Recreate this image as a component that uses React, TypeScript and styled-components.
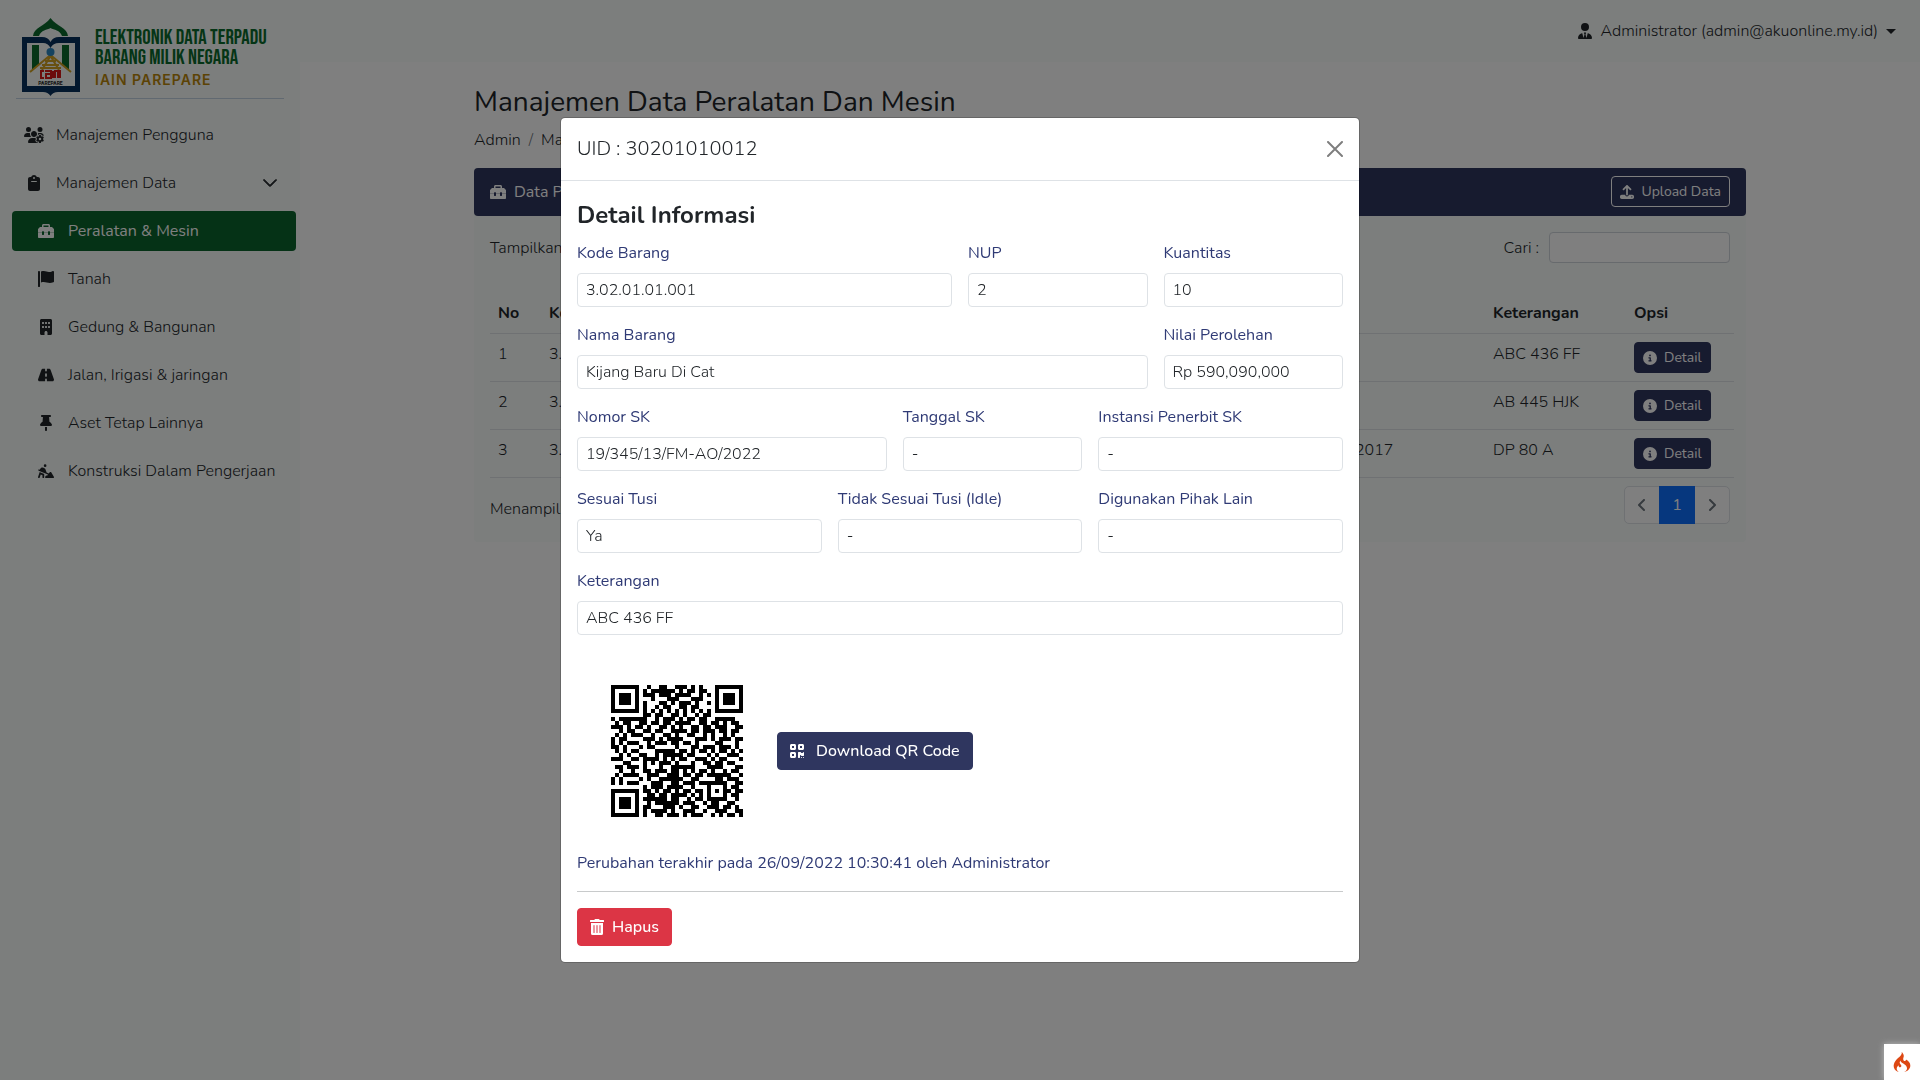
import React from 'react';
import styled, { createGlobalStyle } from 'styled-components';
import {
  FaUsersGear, FaClipboard, FaBuilding, FaRoad, FaThumbtack, FaPersonDigging,
  FaUserTie, FaUpload, FaCircleInfo, FaQrcode, FaAngleLeft, FaAngleRight,
} from 'react-icons/fa6';
import { FaTrashAlt } from 'react-icons/fa';
import { BsChevronDown } from 'react-icons/bs';
import { SiCodeigniter } from 'react-icons/si';

const navy = '#2f365f';
const tint = '#f8fcfa';

const GlobalStyle = createGlobalStyle`
  *, *::before, *::after { box-sizing: border-box; }
  body {
    margin: 0;
    background: #fff;
    color: #212529;
    font-family: Nunito, "Open Sans", "Noto Sans", sans-serif;
    font-size: 16px;
    font-weight: 300;
    line-height: 24px;
  }
  button, input, select { font: inherit; color: inherit; }
  h1, h2, h3, p { margin: 0; }
`;

const Shell = styled.div`
  display: grid;
  grid-template-columns: 300px 1fr;
  min-height: 100vh;
`;

const Sidebar = styled.aside`
  background: ${tint};
`;

const Brand = styled.a`
  display: flex;
  align-items: center;
  gap: 15px;
  height: 99px;
  margin: 0 16px;
  padding: 16px 0 0 6px;
  border-bottom: 1px solid #c3d3e2;
  text-decoration: none;
`;

const BrandText = styled.span`
  display: flex;
  flex-direction: column;
  padding-top: 6px;
  color: #0a6b2c;
  font-family: "Bebas Neue", "Roboto Condensed", Roboto, sans-serif;
  font-size: 21px;
  font-weight: 400;
  line-height: 20px;
  white-space: nowrap;
`;

const BrandPlace = styled.span`
  color: #b8860b;
  font-family: Inter, sans-serif;
  font-size: 14px;
  font-weight: 600;
  letter-spacing: 1px;
  line-height: 24px;
`;

const Menu = styled.nav`
  display: flex;
  flex-direction: column;
  gap: 8px;
  padding: 16px 4px 0 12px;
`;

const MenuLink = styled.a<{ $active?: boolean; $child?: boolean }>`
  display: flex;
  align-items: center;
  gap: 12px;
  height: 40px;
  padding: 0 18px 0 ${p => (p.$child ? 24 : 12)}px;
  border-radius: 4px;
  color: ${p => (p.$active ? '#fff' : '#212529')};
  background: ${p => (p.$active ? '#0a642c' : 'transparent')};
  font-weight: ${p => (p.$active ? 400 : 300)};
  text-decoration: none;
  white-space: nowrap;
`;

const IconBox = styled.span`
  display: inline-flex;
  justify-content: center;
  width: 20px;
  font-size: 16px;
`;

const Chevron = styled(BsChevronDown)`
  margin-left: auto;
  font-size: 16px;
  stroke-width: 1;
`;

const Topbar = styled.header`
  display: flex;
  justify-content: flex-end;
  align-items: center;
  height: 62px;
  padding-right: 24px;
  background: ${tint};
`;

const Account = styled.button`
  display: flex;
  align-items: center;
  gap: 8px;
  padding: 0;
  border: 0;
  background: none;
  svg { width: 14px; }
  &::after {
    content: '';
    border: 5px solid transparent;
    border-top-color: currentColor;
    border-bottom: 0;
  }
`;

const Content = styled.main`
  width: 100%;
  max-width: 1320px;
  margin: 0 auto;
  padding: 22px 24px;
`;

const Title = styled.h1`
  font-size: 28px;
  font-weight: 400;
  line-height: 36px;
`;

const Crumbs = styled.ol`
  display: flex;
  gap: 8px;
  margin: 8px 0 16px;
  padding: 0;
  list-style: none;
  li + li::before { content: '/'; padding-right: 8px; color: #6c757d; }
`;

const Card = styled.section`
  background: ${tint};
  border-radius: 4px;
`;

const CardHead = styled.div`
  display: flex;
  justify-content: space-between;
  align-items: center;
  height: 48px;
  padding: 0 16px 1px;
  border-radius: 4px;
  background: ${navy};
  color: #fff;
  font-weight: 400;
`;

const Inline = styled.div`
  display: flex;
  align-items: center;
  gap: 8px;
`;

const SmallButton = styled.button<{ $outline?: boolean }>`
  display: inline-flex;
  align-items: center;
  gap: 7px;
  height: 31px;
  padding: 0 8px;
  border: 1px solid ${p => (p.$outline ? '#fff' : navy)};
  border-radius: 4px;
  background: ${navy};
  color: #fff;
  font-size: 14px;
  font-weight: 400;
  svg { font-size: 14px; }
`;

const CardBody = styled.div`
  padding: 16px 12px 18px 16px;
`;

const Tools = styled.div`
  display: flex;
  justify-content: space-between;
  margin: 0 4px 14px 0;
  label { display: flex; align-items: center; gap: 10px; }
`;

const SearchBox = styled.input`
  width: 181px;
  height: 31px;
  padding: 0 8px;
  border: 1px solid #ced4da;
  border-radius: 4px;
  background: #fff;
`;

const LengthSelect = styled.select`
  height: 31px;
  border: 1px solid #ced4da;
  border-radius: 4px;
  background: #fff;
`;

const Table = styled.table`
  width: 100%;
  border-collapse: collapse;
  table-layout: fixed;
  th, td {
    height: 48px;
    padding: 8px;
    border-bottom: 1px solid #dee2e6;
    text-align: left;
    vertical-align: top;
    white-space: nowrap;
  }
  th { height: 56px; padding-top: 24px; font-weight: 700; }
  td:last-child { line-height: 0; }
`;

const TableFoot = styled.div`
  display: flex;
  justify-content: space-between;
  padding: 8px 4px 0 0;
  p { padding-top: 11px; }
`;

const Pager = styled.nav`
  display: flex;
  height: 38px;
  border: 1px solid #dee2e6;
  border-radius: 5px;
  background: #fff;
`;

const PageButton = styled.button<{ $current?: boolean }>`
  display: grid;
  place-items: center;
  width: ${p => (p.$current ? 36 : 34)}px;
  margin: ${p => (p.$current ? '-1px 0' : '0')};
  padding: 0;
  border: 0;
  background: ${p => (p.$current ? '#0d6efd' : 'transparent')};
  color: ${p => (p.$current ? '#fff' : '#6c757d')};
  font-weight: 400;
  svg { font-size: 16px; }
`;

const Backdrop = styled.div`
  position: fixed;
  inset: 0;
  overflow: auto;
  padding: 117px 16px;
  background: rgba(0, 0, 0, 0.5);
`;

const Dialog = styled.div`
  width: 100%;
  max-width: 800px;
  margin: 0 auto;
  border: 1px solid rgba(0, 0, 0, 0.2);
  border-radius: 5px;
  background: #fff;
  background-clip: padding-box;
`;

const DialogHead = styled.div`
  display: flex;
  align-items: center;
  justify-content: space-between;
  height: 63px;
  padding: 0 16px;
  border-bottom: 1px solid #dee2e6;
  h2 { font-size: 20px; font-weight: 300; line-height: 30px; }
`;

const CloseButton = styled.button`
  display: grid;
  padding: 0;
  border: 0;
  background: none;
  color: #000;
  opacity: 0.5;
`;

const DialogBody = styled.form`
  padding: 16px;
  h3 { margin-bottom: 8px; font-size: 24px; font-weight: 700; line-height: 36px; }
  hr { margin: 16px 0; border: 0; border-top: 1px solid #c8cacb; }
`;

const Fields = styled.div`
  display: grid;
  grid-template-columns: repeat(12, minmax(0, 1fr));
  gap: 16px;
`;

const Field = styled.label<{ $span: number }>`
  grid-column: span ${p => p.$span};
  display: flex;
  flex-direction: column;
  gap: 8px;
  color: #2f3a75;
  font-weight: 400;
  input {
    width: 100%;
    height: 34px;
    padding: 0 8px;
    border: 1px solid #dee2e6;
    border-radius: 4px;
    background: #fff;
    color: #212529;
    font-weight: 300;
  }
`;

const QrRow = styled.div`
  display: flex;
  align-items: center;
  margin-top: 16px;
`;

const QrBox = styled.div`
  display: grid;
  padding: 34px;
`;

const Button = styled.button<{ $danger?: boolean }>`
  display: inline-flex;
  align-items: center;
  gap: ${p => (p.$danger ? 8 : 12)}px;
  height: 38px;
  padding: 0 12px;
  border: 1px solid ${p => (p.$danger ? '#dc3545' : navy)};
  border-radius: 4px;
  background: ${p => (p.$danger ? '#dc3545' : navy)};
  color: #fff;
  font-weight: 500;
  svg { width: 14px; height: 16px; }
`;

const Changed = styled.p`
  color: #2f3a75;
  font-weight: 400;
`;

const DebugLink = styled.a`
  position: fixed;
  right: 0;
  bottom: 0;
  display: grid;
  place-items: center;
  width: 36px;
  height: 36px;
  background: #fff;
  box-shadow: 0 0 6px #bbb;
  color: #dd4814;
  svg { font-size: 20px; }
`;

const Flag = () => (
  <svg width="16" height="16" viewBox="0 0 512 512" fill="currentColor" aria-hidden="true">
    <path d="M64 496C64 504.8 56.84 512 48 512h-32C7.164 512 0 504.8 0 496V32c0-17.75 14.25-32 32-32s32 14.25 32 32V496zM476.3 0c-6.365 0-13.01 1.35-19.34 4.233c-45.69 20.86-79.56 27.94-107.8 27.94c-59.96 0-94.81-31.86-163.9-31.87C160.9 .3055 131.6 4.867 96 15.75v350.5c32-9.984 59.87-14.1 84.85-14.1c73.63 0 124.9 31.78 198.6 31.78c31.91 0 68.02-5.971 111.1-23.09C504.1 355.9 512 344.4 512 332.1V30.73C512 11.1 495.3 0 476.3 0z" />
  </svg>
);

const Toolbox = () => (
  <svg width="16" height="16" viewBox="0 0 512 512" fill="currentColor" aria-hidden="true">
    <path d="M502.6 182.6l-45.25-45.25C451.4 131.4 443.3 128 434.8 128H384V80C384 53.5 362.5 32 336 32h-160C149.5 32 128 53.5 128 80V128H77.25c-8.5 0-16.62 3.375-22.62 9.375L9.375 182.6C3.375 188.6 0 196.8 0 205.3V312h128v-32C128 271.1 135.1 264 144 264h32C184.9 264 192 271.1 192 280v32h128v-32C320 271.1 327.1 264 336 264h32C376.9 264 384 271.1 384 280v32h128V205.3C512 196.8 508.6 188.6 502.6 182.6zM336 128h-160V80h160V128zM384 368c0 8.875-7.125 16-16 16h-32c-8.875 0-16-7.125-16-16v-48H192v48C192 376.9 184.9 384 176 384h-32C135.1 384 128 376.9 128 368v-48H0V448c0 17.62 14.38 32 32 32h448c17.62 0 32-14.38 32-32v-128h-128V368z" />
  </svg>
);

const CloseIcon = () => (
  <svg width="16" height="16" viewBox="0 0 16 16" aria-hidden="true">
    <path d="M1 1L15 15M15 1L1 15" stroke="currentColor" strokeWidth="2" strokeLinecap="round" />
  </svg>
);

const Logo = () => (
  <svg width="58" height="78" viewBox="0 0 58 78" aria-hidden="true">
    <path d="M11 18C12 9 22 9 28.5 0C35 9 45 9 46 18H40C38 12 32 12 28.5 10C25 12 19 12 17 18Z" fill="#0a6b2c" />
    <path d="M0 19H20Q26 19 28.5 24Q31 19 37 19H58V74H36Q31 74 28.5 78Q26 74 21 74H0Z" fill="#06305c" />
    <path d="M5 25H21Q26 25 28.5 30Q31 25 37 25H53V68H5Z" fill={tint} />
    <path d="M10 27H17V47L10 52ZM40 27H47V52L40 47Z" fill="#0a6b2c" />
    <path d="M28.5 37L8 54M28.5 37L49 54M28.5 38L20 52M28.5 38L37 52M23 43H34M20 47H37M18 50H39" stroke="#d0a020" strokeWidth="2" fill="none" />
    <circle cx="28.5" cy="34" r="4" fill="#2a86c0" />
    <path d="M22 53H19V60H22M23 53H29V60H24V56H29M31 53V60M33 60V53H36V60M35 53H38V60" stroke="#d81818" strokeWidth="2" fill="none" />
    <text x="28.5" y="67" textAnchor="middle" fontFamily="Roboto, sans-serif" fontSize="5" fontWeight="700" fill="#222">PAREPARE</text>
  </svg>
);

const qrRows = [
  '111111100100110011101010001111111',
  '100000101011111101011011001000001',
  '101110101110111011110010101011101',
  '101110100010001110001110001011101',
  '101110101000110101110100101011101',
  '100000101001011001101100001000001',
  '111111101010101010101010101111111',
  '000000001101100110100101100000000',
  '101111111001011101011011001111100',
  '010110011011011011110011011010110',
  '111010110100110101001101101110011',
  '001011001101100111101101110110110',
  '010101110010011010011001010010100',
  '101100001110101111000111010111011',
  '101011100101110110110100001100010',
  '110100010110000010001101110111010',
  '010101100001111101101011010110101',
  '001010011001011111011000101001110',
  '111001101111010101100111010110001',
  '000110001010111010001001101101100',
  '011011101000100111111000111100011',
  '001001001101110110101011010010110',
  '010111100111001110110110111111001',
  '101000010100111111001100001101110',
  '101011100011100110111011111110011',
  '000000001011101111001000100010110',
  '111111101101011010110110101011011',
  '100000100110110111101010100010110',
  '101110101111110110010110111110010',
  '101110100101111110111001011001100',
  '101110101100011101001100111011010',
  '100000101011110100111001001110011',
  '111111101001101110101110010101101',
];

const QrCode = () => (
  <svg width="132" height="132" viewBox="0 0 33 33" shapeRendering="crispEdges" role="img" aria-label="QR Code">
    {qrRows.flatMap((row, y) =>
      [...row].map((cell, x) => (cell === '1' ? <rect key={`${x}-${y}`} x={x} y={y} width="1" height="1" /> : null)),
    )}
  </svg>
);

const assets = [
  { icon: <Toolbox />, label: 'Peralatan & Mesin', active: true },
  { icon: <Flag />, label: 'Tanah' },
  { icon: <FaBuilding />, label: 'Gedung & Bangunan' },
  { icon: <FaRoad />, label: 'Jalan, Irigasi & jaringan' },
  { icon: <FaThumbtack />, label: 'Aset Tetap Lainnya' },
  { icon: <FaPersonDigging />, label: 'Konstruksi Dalam Pengerjaan' },
];

const rows = [
  { code: '3.02.01.01.001', name: 'Kijang Baru Di Cat', year: '', note: 'ABC 436 FF' },
  { code: '3.02.01.01.001', name: 'Kijang', year: '', note: 'AB 445 HJK' },
  { code: '3.02.01.01.001', name: 'Kijang', year: '2017', note: 'DP 80 A' },
];

const fields = [
  { label: 'Kode Barang', value: '3.02.01.01.001', span: 6 },
  { label: 'NUP', value: '2', span: 3 },
  { label: 'Kuantitas', value: '10', span: 3 },
  { label: 'Nama Barang', value: 'Kijang Baru Di Cat', span: 9 },
  { label: 'Nilai Perolehan', value: 'Rp 590,090,000', span: 3 },
  { label: 'Nomor SK', value: '19/345/13/FM-AO/2022', span: 5 },
  { label: 'Tanggal SK', value: '-', span: 3 },
  { label: 'Instansi Penerbit SK', value: '-', span: 4 },
  { label: 'Sesuai Tusi', value: 'Ya', span: 4 },
  { label: 'Tidak Sesuai Tusi (Idle)', value: '-', span: 4 },
  { label: 'Digunakan Pihak Lain', value: '-', span: 4 },
  { label: 'Keterangan', value: 'ABC 436 FF', span: 12 },
];

export default function App() {
  return (
    <>
      <GlobalStyle />
      <Shell>
        <Sidebar>
          <Brand href="#">
            <Logo />
            <BrandText>
              <span>ELEKTRONIK DATA TERPADU</span>
              <span>BARANG MILIK NEGARA</span>
              <BrandPlace>IAIN PAREPARE</BrandPlace>
            </BrandText>
          </Brand>
          <Menu>
            <MenuLink href="#"><IconBox><FaUsersGear size={20} /></IconBox>Manajemen Pengguna</MenuLink>
            <MenuLink href="#"><IconBox><FaClipboard /></IconBox>Manajemen Data<Chevron /></MenuLink>
            {assets.map(a => (
              <MenuLink key={a.label} href="#" $child $active={a.active}>
                <IconBox>{a.icon}</IconBox>{a.label}
              </MenuLink>
            ))}
          </Menu>
        </Sidebar>
        <div>
          <Topbar>
            <Account><FaUserTie size={16} />Administrator (admin@akuonline.my.id)</Account>
          </Topbar>
          <Content>
            <Title>Manajemen Data Peralatan Dan Mesin</Title>
            <Crumbs><li>Admin</li><li>Manajemen Data</li></Crumbs>
            <Card>
              <CardHead>
                <Inline><Toolbox />Data Peralatan</Inline>
                <SmallButton $outline><FaUpload />Upload Data</SmallButton>
              </CardHead>
              <CardBody>
                <Tools>
                  <label>Tampilkan <LengthSelect defaultValue="10"><option>10</option></LengthSelect></label>
                  <label>Cari : <SearchBox type="search" /></label>
                </Tools>
                <Table>
                  <colgroup>
                    <col style={{ width: 51 }} /><col style={{ width: 240 }} /><col /><col style={{ width: 138 }} />
                    <col style={{ width: 141 }} /><col style={{ width: 108 }} />
                  </colgroup>
                  <thead>
                    <tr><th>No</th><th>Kode Barang</th><th colSpan={2}>Nama Barang</th><th>Keterangan</th><th>Opsi</th></tr>
                  </thead>
                  <tbody>
                    {rows.map((r, i) => (
                      <tr key={r.note}>
                        <td>{i + 1}</td><td>{r.code}</td><td>{r.name}</td><td>{r.year}</td><td>{r.note}</td>
                        <td><SmallButton><FaCircleInfo />Detail</SmallButton></td>
                      </tr>
                    ))}
                  </tbody>
                </Table>
                <TableFoot>
                  <p>Menampilkan 1 - 3 data</p>
                  <Pager aria-label="Halaman">
                    <PageButton aria-label="Sebelumnya"><FaAngleLeft /></PageButton>
                    <PageButton $current>1</PageButton>
                    <PageButton aria-label="Berikutnya"><FaAngleRight /></PageButton>
                  </Pager>
                </TableFoot>
              </CardBody>
            </Card>
          </Content>
        </div>
      </Shell>
      <Backdrop>
        <Dialog role="dialog" aria-modal="true" aria-labelledby="uid">
          <DialogHead>
            <h2 id="uid">UID : 30201010012</h2>
            <CloseButton aria-label="Tutup"><CloseIcon /></CloseButton>
          </DialogHead>
          <DialogBody onSubmit={e => e.preventDefault()}>
            <h3>Detail Informasi</h3>
            <Fields>
              {fields.map(f => (
                <Field key={f.label} $span={f.span}>{f.label}<input readOnly value={f.value} /></Field>
              ))}
            </Fields>
            <QrRow>
              <QrBox><QrCode /></QrBox>
              <Button type="button"><FaQrcode />Download QR Code</Button>
            </QrRow>
            <Changed>Perubahan terakhir pada 26/09/2022 10:30:41 oleh Administrator</Changed>
            <hr />
            <Button type="button" $danger><FaTrashAlt />Hapus</Button>
          </DialogBody>
        </Dialog>
      </Backdrop>
      <DebugLink href="#" aria-label="CodeIgniter"><SiCodeigniter /></DebugLink>
    </>
  );
}
